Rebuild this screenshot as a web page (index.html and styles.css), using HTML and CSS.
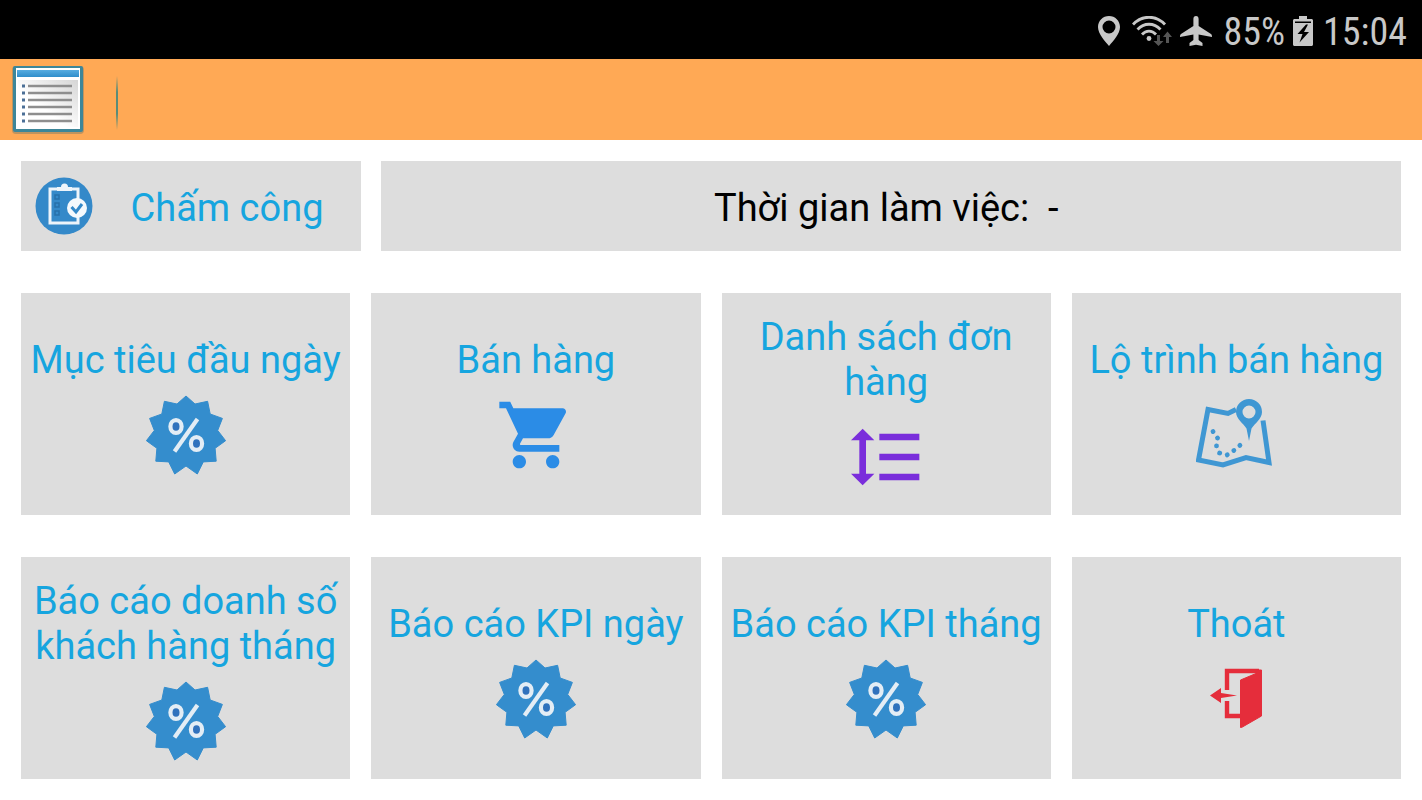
FILE: index.html
```html
<!DOCTYPE html>
<html lang="vi">
<head>
    <meta charset="UTF-8">
    <meta name="viewport" content="width=device-width, initial-scale=1.0">
    <title>Bán hàng</title>
    <link rel="stylesheet" href="styles.css">
</head>
<body>
    <!-- Shared icons -->
    <svg class="sprite" aria-hidden="true">
        <symbol id="icon-percent" viewBox="0 0 80 80">
            <polygon fill="#348dcd" stroke="#348dcd" stroke-linejoin="round" points="40,1 49,9 61.6,6.3 64.2,19 76.4,23.4 71.7,35.4 79.6,45.7 69.1,53.3 70.2,66.2 57.3,66.9 51.3,79 40,71 28.7,79 22.7,66.9 9.8,66.2 10.9,53.3 .4,45.7 8.3,35.4 3.6,23.4 15.8,19 18.4,6.3 31,9"/>
            <g fill="#3072bd" stroke="#e3edf5" stroke-width="4.2">
                <ellipse cx="30" cy="31.5" rx="5.6" ry="6.4"/>
                <ellipse cx="50.5" cy="48.5" rx="5.6" ry="6.4"/>
                <path d="M51.5 24 28.500 56.500"/>
            </g>
        </symbol>
    </svg>

    <!-- Status bar -->
    <div class="status-bar">
        <svg class="status-pin" viewBox="0 0 22 30">
            <path fill="#c8c8c8" fill-rule="evenodd" d="M11 0C4.900 0 0 4.900 0 11c0 7 7 14 11 19 4-5 11-12 11-19C22 4.900 17.100 0 11 0zm0 4.500a6.500 6.500 0 1 1 0 13 6.500 6.500 0 0 1 0-13z"/>
        </svg>
        <svg class="status-wifi" viewBox="0 0 40 30">
            <g fill="none" stroke="#c8c8c8" stroke-width="2.800">
                <path d="M1 8.500C10-1.200 24-1.200 33 8.500"/>
                <path d="M5.500 13.500c6.500-7 16.500-7 23 0"/>
                <path d="M10 18.500c4-4.500 10-4.500 14 0"/>
            </g>
            <circle cx="17" cy="22.500" r="2.400" fill="#c8c8c8"/>
            <path fill="#555" d="M25 19h3v6h3.500L26.500 30l-5-5H25zM34 27h3v-6h3L35.500 15.500 31 21H34z"/>
        </svg>
        <svg class="status-plane" viewBox="0 0 32 30">
            <path fill="#c8c8c8" d="M16 0c-1.700 0-2.600 1.300-2.600 3v7L1 18c-.7.500-1 1.300-1 3l13.400-2.500v5.500L9.500 27v3l6.500-1.300 6.500 1.300v-3l-3.900-3v-5.500L32 21c0-1.700-.3-2.500-1-3l-12.400-8V3c0-1.700-.9-3-2.600-3z"/>
        </svg>
        <span>85%</span>
        <svg class="status-battery" viewBox="0 0 20 30">
            <path fill="#c8c8c8" d="M6 0h8v3h4.500c.8 0 1.500.7 1.500 1.500v24c0 .8-.7 1.500-1.500 1.500h-17C.7 30 0 29.300 0 28.500v-24C0 3.700.7 3 1.500 3H6z"/>
            <path fill="#000" d="M2 5.500h16v1.500H2zM13 8.500 4.500 18h5l-3 8.500L16 16h-5l4-7.500z"/>
        </svg>
        <span>15:04</span>
    </div>

    <!-- Title bar -->
    <header class="title-bar">
        <button class="menu-btn" aria-label="Menu">
            <svg viewBox="0 0 72 68">
                <defs>
                    <linearGradient id="page-fill" x1="1" y1="0" x2="0" y2="1">
                        <stop offset="0" stop-color="#d5d5d5"/>
                        <stop offset=".6" stop-color="#fff"/>
                    </linearGradient>
                    <linearGradient id="page-head" x1="0" y1="0" x2="0" y2="1">
                        <stop offset="0" stop-color="#57ace0"/>
                        <stop offset="1" stop-color="#2f8ecb"/>
                    </linearGradient>
                </defs>
                <rect width="72" height="68" rx="4" fill="#807d68" opacity=".5"/>
                <rect x="1" width="70" height="66" rx="2" fill="#3d8699"/>
                <rect x="4" y="2" width="64" height="61" fill="#fff"/>
                <rect x="5" y="4" width="62" height="7" fill="url(#page-head)"/>
                <rect x="6" y="14" width="60" height="47" fill="url(#page-fill)"/>
                <path d="M16 20h44M16 27h44M16 34h44M16 41h44M16 48h44M16 55h44" stroke="#8e8e8e" stroke-width="2.400"/>
                <path d="M10 20h3M10 27h3M10 34h3M10 41h3M10 48h3M10 55h3" stroke="#4b6f96" stroke-width="3"/>
            </svg>
        </button>
        <span class="divider"></span>
    </header>

    <main>
        <!-- Check-in row -->
        <div class="checkin-row">
            <button class="checkin-btn">
                <svg viewBox="0 0 58 58">
                    <circle cx="29" cy="29" r="28.500" fill="#3489c9"/>
                    <path d="M15 12h28v34H15z" fill="none" stroke="#edf4fa" stroke-width="3"/>
                    <path d="M22 14v-4h4a3.500 3.500 0 0 1 7 0h4v4z" fill="#edf4fa"/>
                    <path d="M20 18h4v4h-4zM20 26h4v4h-4zM20 34h4v4h-4z" fill="none" stroke="#2670aa" stroke-width="1.500"/>
                    <circle cx="42" cy="31" r="10" fill="#f4f9fd"/>
                    <path d="m36.500 30 4.500 5 6-8" fill="none" stroke="#3489c9" stroke-width="3"/>
                </svg>
                <span>Chấm công</span>
            </button>
            <div class="work-time">Thời gian làm việc:&nbsp; -&nbsp;</div>
        </div>

        <!-- Functions -->
        <div class="tiles">
            <button class="tile">
                <span>Mục tiêu đầu ngày</span>
                <svg><use href="#icon-percent"/></svg>
            </button>
            <button class="tile">
                <span>Bán hàng</span>
                <svg viewBox="0 0 24 24">
                    <path fill="#2b8ce6" d="M7 18c-1.100 0-1.990.9-1.990 2S5.900 22 7 22s2-.9 2-2-.9-2-2-2zM1 2v2h2l3.600 7.590-1.350 2.450c-.16.280-.25.610-.25.960 0 1.100.9 2 2 2h12v-2H7.420c-.14 0-.25-.11-.25-.25l.03-.12.9-1.630h7.450c.75 0 1.410-.41 1.750-1.030l3.580-6.490c.08-.14.12-.31.12-.480 0-.55-.45-1-1-1H5.210l-.94-2H1zm16 16c-1.100 0-1.990.9-1.990 2s.89 2 1.990 2 2-.9 2-2-.9-2-2-2z"/>
                </svg>
            </button>
            <button class="tile">
                <span>Danh sách đơn hàng</span>
                <svg viewBox="0 0 24 24">
                    <path fill="#7a2edb" d="M6 7h2.500L5 3.500 1.500 7H4v10H1.500L5 20.500 8.500 17H6V7zm4-2v2h12V5H10zm0 14h12v-2H10v2zm0-6h12v-2H10v2z"/>
                </svg>
            </button>
            <button class="tile">
                <span>Lộ trình bán hàng</span>
                <svg viewBox="0 0 80 80">
                    <path d="M40 14.500 32 18.500 12 14.500 2.500 65l24.500 5 23-7.500 23 5-6-42" fill="none" stroke="#3f97d3" stroke-width="5"/>
                    <path fill="#3f97d3" fill-rule="evenodd" d="M53 4a13 13 0 0 0-13 13c0 7 7.500 11.500 10.500 16.500L53 46l2.500-12.500C58.500 28.500 66 24 66 17A13 13 0 0 0 53 4zm0 6.500a6.500 6.500 0 1 1 0 13 6.500 6.500 0 0 1 0-13z"/>
                    <path d="M17 36.500 21.500 43 20.500 51l3 7 7.500 2 7.500-5 7-6" fill="none" stroke="#3f97d3" stroke-width="4.800" stroke-linecap="round" stroke-dasharray=".1 7.800"/>
                </svg>
            </button>
            <button class="tile">
                <span>Báo cáo doanh số khách hàng tháng</span>
                <svg><use href="#icon-percent"/></svg>
            </button>
            <button class="tile">
                <span>Báo cáo KPI ngày</span>
                <svg><use href="#icon-percent"/></svg>
            </button>
            <button class="tile">
                <span>Báo cáo KPI tháng</span>
                <svg><use href="#icon-percent"/></svg>
            </button>
            <button class="tile">
                <span>Thoát</span>
                <svg viewBox="0 0 80 80">
                    <path d="M31 31V12h32M31 42v15h15" fill="none" stroke="#e52d3b" stroke-width="4.400"/>
                    <path fill="#e52d3b" stroke="#e52d3b" stroke-linejoin="round" d="M44.500 21 60 14.500V11h5.500v46L45.500 68.500h-1z"/>
                    <path fill="#e52d3b" d="M14 36.500 25 29v5l16 2.500-16 2.500v5z"/>
                </svg>
            </button>
        </div>
    </main>
</body>
</html>
```
FILE: styles.css
```css
* {
    box-sizing: border-box;
}

body {
    margin: 0;
    background-color: #fff;
    font-family: Roboto, "Noto Sans", sans-serif;
    font-size: 38px;
    line-height: 45px;
    color: #000;
}

button {
    border: none;
    background: none;
    padding: 0;
    font: inherit;
    cursor: pointer;
}

svg {
    display: block;
    flex-shrink: 0;
}

.sprite {
    display: none;
}

.status-bar {
    display: flex;
    align-items: center;
    justify-content: flex-end;
    gap: 8px;
    height: 59px;
    padding: 2px 15px 0 0;
    background-color: #000;
    color: #c8c8c8;
    font-family: "Roboto Condensed", "Liberation Sans Narrow", Roboto, sans-serif;
}

.status-bar span {
    padding-top: 4px;
}

.status-pin {
    width: 22px;
    height: 30px;
    margin-right: 4px;
}

.status-wifi {
    width: 40px;
    height: 30px;
}

.status-plane {
    width: 32px;
    height: 30px;
    margin-right: 4px;
}

.status-battery {
    width: 20px;
    height: 30px;
    margin-right: 2px;
}

.title-bar {
    display: flex;
    align-items: center;
    gap: 32px;
    height: 81px;
    padding: 0 12px;
    background-color: #ffa955;
}

.menu-btn svg {
    width: 72px;
    height: 68px;
}

.divider {
    width: 2px;
    height: 54px;
    margin-top: 6px;
    background: linear-gradient(rgba(91, 140, 120, 0), #5b8c78 30%, #5b8c78 70%, rgba(91, 140, 120, 0));
}

main {
    padding: 21px;
}

.checkin-row {
    display: grid;
    grid-template-columns: 1fr 3fr;
    gap: 20px;
    margin-bottom: 42px;
}

.checkin-btn,
.work-time {
    display: flex;
    align-items: center;
    min-height: 90px;
    background-color: #ddd;
}

.checkin-btn {
    padding: 0 14px;
    color: #16a5df;
}

.checkin-btn svg {
    width: 58px;
    height: 58px;
}

.checkin-btn span {
    flex: 1;
    padding: 4px 0 0 14px;
}

.work-time {
    justify-content: center;
    padding-top: 4px;
}

.tiles {
    display: grid;
    grid-template-columns: repeat(4, 1fr);
    gap: 42px 21px;
}

.tile {
    display: flex;
    flex-direction: column;
    align-items: center;
    justify-content: center;
    gap: 12px;
    min-height: 222px;
    padding: 4px 4px 0;
    background-color: #ddd;
    color: #16a5df;
}

.tile svg {
    width: 80px;
    height: 80px;
}
```
